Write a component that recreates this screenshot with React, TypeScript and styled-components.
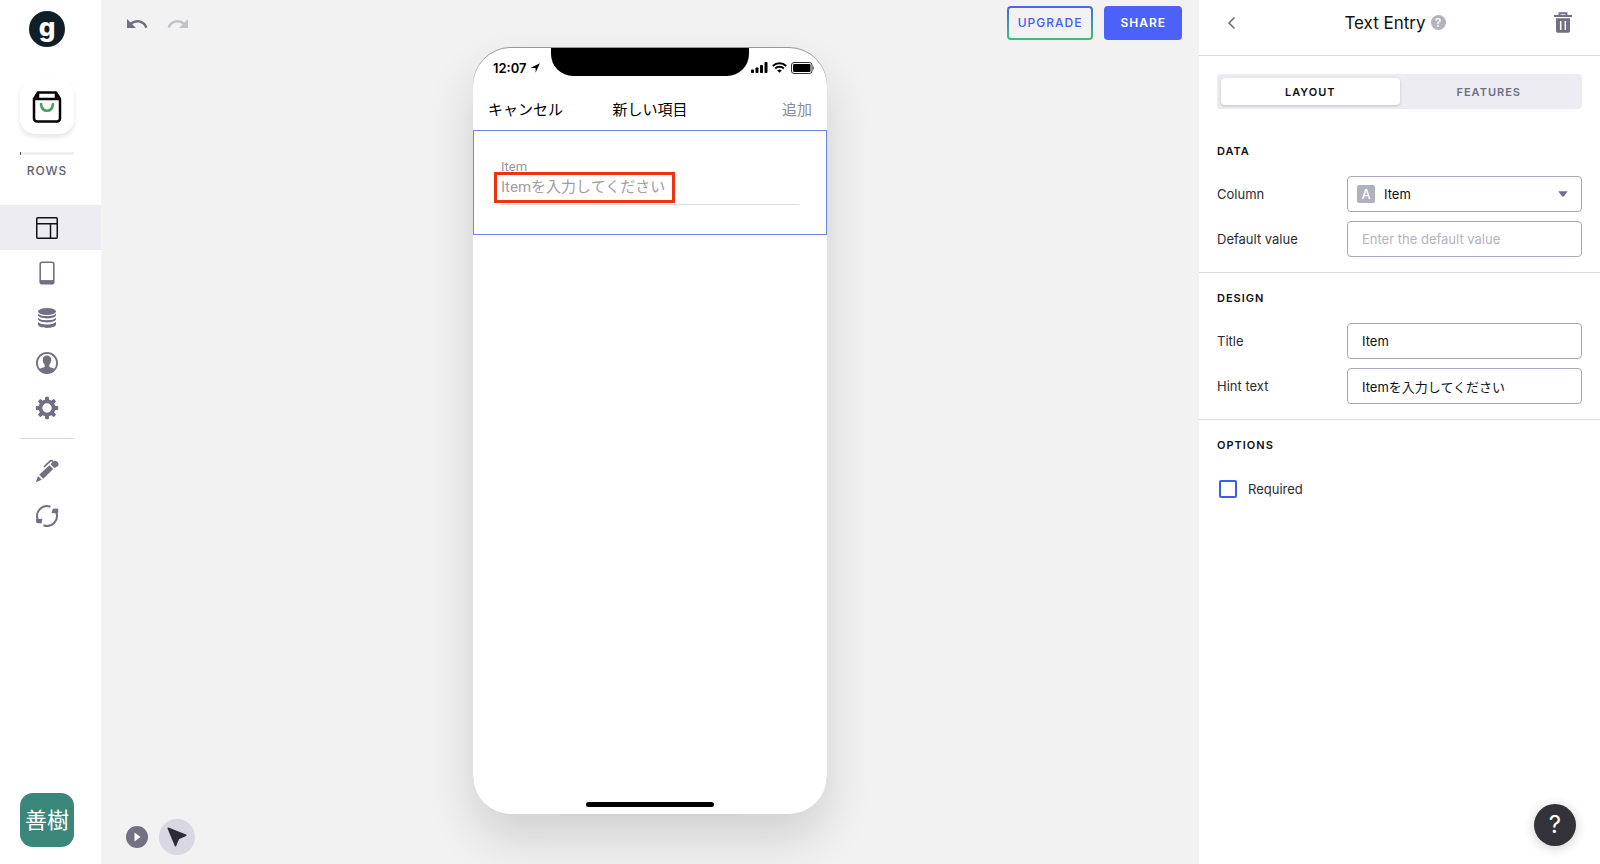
import React from "react";
import styled, { createGlobalStyle } from "styled-components";

const GlobalStyle = createGlobalStyle`
  *, *::before, *::after { box-sizing: border-box; }
  body {
    margin: 0;
    background: #f2f2f2;
    color: #0f0f14;
    font-family: Inter, "Noto Sans CJK JP", sans-serif;
    font-size: 13px;
    line-height: 20px;
  }
  button, input, select { font: inherit; color: inherit; letter-spacing: inherit; }
  button { border: 0; padding: 0; background: none; cursor: pointer; }
  svg { display: block; }
`;

const Shell = styled.div`
  display: grid;
  grid-template-columns: 101px minmax(0, 1fr) 401px;
  min-height: 100vh;
`;

/* Sidebar */

const Sidebar = styled.nav`
  display: flex;
  flex-direction: column;
  background: #fff;
  padding: 11px 0 17px;
`;

const SideBlock = styled.div`
  display: flex;
  flex-direction: column;
  align-items: flex-start;
  padding-left: 20px;
`;

const Logo = styled.a`
  display: flex;
  justify-content: center;
  width: 36px;
  height: 36px;
  margin-left: 9px;
  border-radius: 50%;
  background: #0f1f26;
  color: #fff;
  font-size: 26px;
  font-weight: 800;
  line-height: 31px;
  text-decoration: none;
`;

const AppTile = styled.button`
  display: grid;
  place-items: center;
  width: 54px;
  height: 54px;
  margin-top: 33px;
  border-radius: 15px;
  background: #fff;
  box-shadow: 0 3px 5px rgba(0, 0, 0, 0.1);
`;

const Usage = styled.div`
  width: 54px;
  height: 3px;
  margin-top: 18px;
  background: linear-gradient(to right, #47586a 1px, #f0f0f1 1px);
`;

const UsageLabel = styled.div`
  width: 54px;
  margin: 6px 0 24px;
  color: #5f5e70;
  font-size: 12px;
  font-weight: 500;
  letter-spacing: 1px;
  text-align: center;
`;

const NavButton = styled.button<{ $active?: boolean }>`
  display: grid;
  place-items: center;
  width: 100%;
  height: 45px;
  padding-right: 7px;
  background: ${(p) => (p.$active ? "#edecf2" : "transparent")};
  color: ${(p) => (p.$active ? "#111016" : "#716f81")};
`;

const SideRule = styled.hr`
  width: 54px;
  height: 1px;
  margin: 8px 27px 9px 20px;
  border: 0;
  background: #d6d5e3;
`;

const Avatar = styled.button`
  width: 54px;
  height: 54px;
  margin: auto 0 0 20px;
  border-radius: 13px;
  background: #3a8679;
  color: #fff;
  font-size: 22px;
`;

/* Canvas */

const Canvas = styled.main`
  display: grid;
  grid-template-columns: 1fr 354px 1fr;
`;

const Column = styled.div<{ $end?: boolean }>`
  display: flex;
  flex-direction: column;
  justify-content: space-between;
  align-items: ${(p) => (p.$end ? "flex-end" : "flex-start")};
  padding: ${(p) => (p.$end ? "6px 17px" : "12px 24px 9px")};
`;

const Tools = styled.div<{ $gap: number }>`
  display: flex;
  align-items: center;
  gap: ${(p) => p.$gap}px;
`;

const ToolButton = styled.button<{ $muted?: boolean }>`
  color: ${(p) => (p.$muted ? "#c3c2cc" : "#716f81")};
`;

const PlayButton = styled.button`
  display: grid;
  place-items: center;
  width: 22px;
  height: 22px;
  margin-left: 1px;
  border-radius: 50%;
  background: #737182;
`;

const PointerButton = styled.button`
  display: grid;
  place-items: center;
  width: 36px;
  height: 36px;
  border-radius: 50%;
  background: #d8d7e2;
`;

const UpgradeButton = styled.button`
  height: 34px;
  padding: 0 9px;
  border: 2px solid transparent;
  border-radius: 4px;
  background: linear-gradient(#f2f2f2, #f2f2f2) padding-box,
    linear-gradient(#4665ee, #3fc06c) border-box;
  color: #3f5cf3;
  font-size: 12px;
  font-weight: 500;
  letter-spacing: 1px;
`;

const ShareButton = styled.button`
  height: 34px;
  padding: 0 16px;
  border-radius: 4px;
  background: #4b61f8;
  color: #fff;
  font-size: 12px;
  font-weight: 600;
  letter-spacing: 1px;
`;

const Phone = styled.section`
  display: flex;
  flex-direction: column;
  min-height: 640px;
  margin: 48px 0 50px;
  border-radius: 38px;
  background: #fff;
  box-shadow: 0 24px 48px rgba(0, 0, 0, 0.14), 0 -1px 0 #9b9b9b;
`;

const StatusBar = styled.div`
  display: grid;
  grid-template-columns: 78px 198px 78px;
  height: 39px;
`;

const Clock = styled.div`
  display: flex;
  align-items: center;
  gap: 3px;
  padding-left: 20px;
  color: #000;
  font-weight: 600;
`;

const Notch = styled.div`
  height: 28px;
  border-radius: 0 0 22px 22px;
  background: #000;
`;

const Signals = styled.div`
  display: flex;
  align-items: center;
  justify-content: flex-end;
  gap: 4px;
  padding-right: 13px;
`;

const AppBar = styled.header`
  display: grid;
  grid-template-columns: 1fr auto 1fr;
  align-items: center;
  height: 43px;
  padding: 3px 15px 0;
  font-size: 15px;
  color: #000;
`;

const AppBarButton = styled.button<{ $muted?: boolean }>`
  color: ${(p) => (p.$muted ? "#8c8c8c" : "#000")};
  text-align: ${(p) => (p.$muted ? "right" : "left")};
`;

const AppBarTitle = styled.h2`
  margin: 0;
  font-size: 15px;
  font-weight: 400;
`;

const Selected = styled.div`
  height: 105px;
  padding: 27px 27px 0;
  border: 1px solid #6e86dd;
  color: #979797;
  font-family: Roboto, "Noto Sans CJK JP", sans-serif;
`;

const PreviewLabel = styled.label`
  display: block;
  line-height: 18px;
`;

const PreviewInput = styled.input`
  display: block;
  width: 100%;
  height: 29px;
  padding: 0 0 6px;
  border: 0;
  border-bottom: 1px solid #dedede;
  outline: 0;
  background: transparent;
  font-size: 15px;
  &::placeholder { color: #a0a0a0; opacity: 1; }
`;

const PreviewField = styled.div`
  position: relative;
`;

const Highlight = styled.div`
  position: absolute;
  top: -4px;
  left: -7px;
  width: 181px;
  height: 31px;
  border: 3px solid #ee3311;
`;

const HomeBar = styled.div`
  width: 128px;
  height: 5px;
  margin: auto auto 7px;
  border-radius: 3px;
  background: #000;
`;

/* Inspector */

const Inspector = styled.aside`
  position: relative;
  background: #fff;
`;

const PanelHeader = styled.header`
  display: flex;
  align-items: center;
  justify-content: space-between;
  height: 56px;
  padding: 0 28px 10px;
  border-bottom: 1px solid #d5d5d9;
  color: #716f81;
`;

const PanelTitle = styled.h1`
  display: flex;
  align-items: center;
  gap: 5px;
  margin: 0;
  color: #111;
  font-size: 17px;
  font-weight: 400;
`;

const HelpDot = styled.span`
  display: grid;
  place-items: center;
  width: 15px;
  height: 15px;
  border-radius: 50%;
  background: #b3b2be;
  color: #fff;
  font-size: 12px;
  font-weight: 600;
  line-height: 15px;
`;

const Tabs = styled.div`
  display: grid;
  grid-template-columns: 1fr 1fr;
  height: 35px;
  margin: 18px 18px 0;
  padding: 4px;
  border-radius: 4px;
  background: #edecf2;
`;

const Tab = styled.button<{ $active?: boolean }>`
  border-radius: 4px;
  background: ${(p) => (p.$active ? "#fff" : "transparent")};
  box-shadow: ${(p) => (p.$active ? "0 1px 3px rgba(60, 58, 80, 0.25)" : "none")};
  color: ${(p) => (p.$active ? "#0f0f14" : "#716f81")};
  font-size: 11px;
  font-weight: 600;
  letter-spacing: 1px;
`;

const Group = styled.section`
  display: flex;
  flex-direction: column;
  gap: 9px;
  padding: 15px 18px;
  & + & { border-top: 1px solid #d6d5e0; }
`;

const Groups = styled.div`
  padding-top: 17px;
`;

const GroupTitle = styled.h3`
  margin: 0 0 6px;
  font-size: 11px;
  font-weight: 600;
  letter-spacing: 1px;
`;

const FieldRow = styled.div`
  display: grid;
  grid-template-columns: 130px minmax(0, 1fr);
  align-items: center;
`;

const FieldLabel = styled.label`
  color: #2c2b33;
`;

const TextInput = styled.input`
  width: 100%;
  height: 36px;
  padding: 0 14px;
  border: 1px solid #a9a7b8;
  border-radius: 4px;
  outline: 0;
  background: #fff;
  &::placeholder { color: #b3b2be; opacity: 1; }
`;

const SelectBox = styled.div`
  display: grid;
  grid-template-columns: 48px 1fr 38px;
  align-items: center;
  & > * { grid-row: 1; }
`;

const Select = styled.select`
  grid-column: 1 / -1;
  height: 36px;
  padding: 0 36px;
  appearance: none;
  border: 1px solid #a9a7b8;
  border-radius: 4px;
  outline: 0;
  background: #fff;
`;

const TypeBadge = styled.span`
  grid-column: 1;
  width: 18px;
  height: 18px;
  margin-left: 10px;
  border-radius: 2px;
  background: #b1b0bd;
  color: #fff;
  font-weight: 500;
  line-height: 18px;
  text-align: center;
  pointer-events: none;
`;

const Caret = styled.svg`
  grid-column: 3;
  justify-self: center;
  pointer-events: none;
`;

const CheckLabel = styled.label`
  display: flex;
  align-items: center;
  gap: 11px;
  padding: 9px 2px;
  color: #2c2b33;
`;

const Checkbox = styled.input`
  appearance: none;
  width: 18px;
  height: 18px;
  margin: 0;
  border: 2px solid #3c5bf5;
  border-radius: 2px;
  background: #fff;
  &:checked { background: #3c5bf5; }
`;

const HelpButton = styled.button`
  position: absolute;
  right: 24px;
  bottom: 18px;
  width: 42px;
  height: 42px;
  border-radius: 50%;
  background: #323238;
  color: #fff;
  font-size: 24px;
  font-weight: 400;
  box-shadow: 0 2px 12px rgba(0, 0, 0, 0.2);
`;

const UndoIcon = () => (
  <svg width="24" height="24" viewBox="0 0 24 24" fill="currentColor">
    <path d="M12.5 8c-2.65 0-5.05.99-6.9 2.6L2 7v9h9l-3.62-3.62c1.39-1.16 3.16-1.88 5.12-1.88 3.54 0 6.55 2.31 7.6 5.5l2.37-.78C21.08 11.03 17.15 8 12.5 8z" />
  </svg>
);

const RedoIcon = () => (
  <svg width="24" height="24" viewBox="0 0 24 24" fill="currentColor">
    <path d="M18.4 10.6C16.55 8.99 14.15 8 11.5 8c-4.65 0-8.58 3.03-9.96 7.22L3.9 16c1.05-3.19 4.05-5.5 7.6-5.5 1.95 0 3.73.72 5.12 1.88L13 16h9V7l-3.6 3.6z" />
  </svg>
);

const BagIcon = () => (
  <svg width="32" height="34" viewBox="0 0 32 34" fill="none" strokeLinejoin="round" strokeLinecap="round">
    <path d="M3 9v19.500a3 3 0 0 0 3 3h20a3 3 0 0 0 3-3V9M3 9l4-6.500h18L29 9zM7 3v5M25 3v5" stroke="#050505" strokeWidth="2.500" />
    <path d="M10 14c.5 4.500 3 6.800 6 6.800s5.500-2.300 6-6.800" stroke="#46a064" strokeWidth="2.600" />
  </svg>
);

const LayoutIcon = () => (
  <svg width="24" height="24" viewBox="0 0 24 24" fill="none" stroke="currentColor" strokeWidth="1.500">
    <rect x="1.750" y="1.750" width="20.500" height="20.500" rx="1" />
    <path d="M2 7.750h20M15.500 8v14" />
  </svg>
);

const PhoneIcon = () => (
  <svg width="24" height="24" viewBox="0 0 24 24" fill="none" stroke="currentColor">
    <rect x="5.200" y="1.200" width="13.600" height="21.600" rx="2" strokeWidth="1.600" />
    <path d="M5.500 20.800h13" strokeWidth="3.400" />
  </svg>
);

const DatabaseIcon = () => (
  <svg width="24" height="24" viewBox="0 0 24 24" fill="currentColor">
    <ellipse cx="12" cy="5.500" rx="9" ry="3.500" />
    <path d="M3 7.200c1 1.900 4.500 2.900 9 2.900s8-1 9-2.900v1.900c0 1.900-4 3.400-9 3.400s-9-1.500-9-3.400z" />
    <path d="M3 11.200c1 1.900 4.500 2.900 9 2.900s8-1 9-2.900v1.900c0 1.900-4 3.400-9 3.400s-9-1.500-9-3.400z" />
    <path d="M3 15.400c1 1.900 4.500 2.900 9 2.900s8-1 9-2.900v3.100c0 1.900-4 3.400-9 3.400s-9-1.500-9-3.400z" />
    <path d="M3 14.900c1 1.900 4.500 2.900 9 2.900s8-1 9-2.900M3 10.800c1 1.900 4.500 2.900 9 2.900s8-1 9-2.900" fill="none" stroke="#fff" strokeWidth=".9" />
  </svg>
);

const UserIcon = () => (
  <svg width="24" height="24" viewBox="0 0 24 24">
    <circle cx="12" cy="12" r="10.100" fill="none" stroke="currentColor" strokeWidth="1.800" />
    <path d="M12 4.600c-2.700 0-4.200 1.800-4.200 4.300 0 1.900.7 3.700 1.900 4.800v1.900c0 1-4.400 1.400-5.700 3A10.600 10.600 0 0 0 12 22.500a10.600 10.600 0 0 0 8-3.900c-1.300-1.600-5.700-2-5.700-3v-1.900c1.200-1.100 1.900-2.900 1.900-4.800 0-2.500-1.500-4.300-4.200-4.300z" fill="currentColor" />
  </svg>
);

const GearIcon = () => (
  <svg width="24" height="24" viewBox="0 0 24 24" fill="currentColor">
    {[0, 45, 90, 135].map((a) => (
      <path key={a} d="M9.800 5L10.100 1.400Q10.200.8 10.800.8h2.400q.6 0 .7.6L14.200 5zM9.800 19l.3 3.600q.1.600.7.600h2.400q.6 0 .7-.6l.3-3.600z" transform={`rotate(${a} 12 12)`} />
    ))}
    <circle cx="12" cy="12" r="6.600" fill="none" stroke="currentColor" strokeWidth="3.800" />
  </svg>
);

const PenIcon = () => (
  <svg width="24" height="24" viewBox="0 0 24 24" fill="currentColor">
    <path d="M.8 23.200l2.200-6.200 3.700 3.800zM4.200 15.700L14.500 6.300l3.700 3.800L8.300 19.800zM15.600 5.200l2-2.200a3.300 3.300 0 0 1 4.700-.2 3.300 3.300 0 0 1 .1 4.700l-3.100 1.500z" />
    <path d="M9.500 7.500l5-4.800Q16 1.200 17.500 1.900" fill="none" stroke="currentColor" strokeWidth="1.700" strokeLinecap="round" />
  </svg>
);

const SyncIcon = () => (
  <svg width="24" height="24" viewBox="0 0 24 24" fill="none" stroke="currentColor" strokeWidth="2">
    <path d="M15.500 2.700A9.900 9.900 0 0 0 3.200 16.500M8.500 21.300A9.900 9.900 0 0 0 20.800 7.500" />
    <path d="M.8 15l6.600-.2-.9 4.700-5-.6zM23.200 9l-6.600.2 1.200-4.500 5.400-.3z" fill="currentColor" stroke="none" />
  </svg>
);

const LocationIcon = () => (
  <svg width="10" height="10" viewBox="0 0 10 10">
    <path d="M9.800.2L5.600 9.800V4.900H.4z" fill="#000" />
  </svg>
);

const SignalIcon = () => (
  <svg width="17" height="11" viewBox="0 0 17 11" fill="#000">
    <rect x="0" y="7.500" width="3" height="3.500" rx=".8" />
    <rect x="4.500" y="5.500" width="3" height="5.500" rx=".8" />
    <rect x="9" y="3" width="3" height="8" rx=".8" />
    <rect x="13.500" y="0" width="3" height="11" rx=".8" />
  </svg>
);

const WifiIcon = () => (
  <svg width="15" height="11" viewBox="0 0 15 11" fill="none" stroke="#000" strokeWidth="1.900">
    <path d="M.8 4a9.600 9.600 0 0 1 13.400 0M3.200 6.500a6.200 6.200 0 0 1 8.600 0" />
    <path d="M7.500 10.800L5.200 8.500a3.300 3.300 0 0 1 4.600 0z" fill="#000" stroke="none" />
  </svg>
);

const BatteryIcon = () => (
  <svg width="23" height="12" viewBox="0 0 23 12">
    <rect x=".5" y=".5" width="20.500" height="11" rx="2.500" fill="none" stroke="#333" />
    <rect x="2" y="2" width="17.500" height="8" rx="1.200" fill="#000" />
    <path d="M21.800 4v4q1-.6 1-2t-1-2z" fill="#333" />
  </svg>
);

const ChevronIcon = () => (
  <svg width="9" height="12" viewBox="0 0 9 12" fill="none" stroke="currentColor" strokeWidth="1.700" strokeLinecap="round" strokeLinejoin="round">
    <path d="M7 1L2 6l5 5" />
  </svg>
);

const TrashIcon = () => (
  <svg width="18" height="21" viewBox="0 0 18 21">
    <path d="M0 4h18M5.500 4V1.200h7V4" fill="none" stroke="currentColor" strokeWidth="1.900" />
    <path d="M2 6.300h14v12.700a1.800 1.800 0 0 1-1.800 1.800H3.800A1.800 1.800 0 0 1 2 19z" fill="currentColor" />
    <path d="M6.700 9v9M11.300 9v9" stroke="#fff" strokeWidth="1.500" />
  </svg>
);

const sections = [
  { name: "Layout", Icon: LayoutIcon, active: true },
  { name: "Tabs", Icon: PhoneIcon },
  { name: "Data", Icon: DatabaseIcon },
  { name: "Users", Icon: UserIcon },
  { name: "Settings", Icon: GearIcon },
];

export default function App() {
  return (
    <>
      <GlobalStyle />
      <Shell>
        <Sidebar>
          <SideBlock>
            <Logo href="#">g</Logo>
            <AppTile aria-label="App"><BagIcon /></AppTile>
            <Usage />
            <UsageLabel>ROWS</UsageLabel>
          </SideBlock>
          {sections.map(({ name, Icon, active }) => (
            <NavButton key={name} aria-label={name} $active={active}><Icon /></NavButton>
          ))}
          <SideRule />
          <NavButton aria-label="Edit"><PenIcon /></NavButton>
          <NavButton aria-label="Reload"><SyncIcon /></NavButton>
          <Avatar>善樹</Avatar>
        </Sidebar>

        <Canvas>
          <Column>
            <Tools $gap={17}>
              <ToolButton aria-label="Undo"><UndoIcon /></ToolButton>
              <ToolButton aria-label="Redo" $muted><RedoIcon /></ToolButton>
            </Tools>
            <Tools $gap={11}>
              <PlayButton aria-label="Play">
                <svg width="8" height="10" viewBox="0 0 8 10"><path d="M1.500.5v9L7.500 5z" fill="#fff" /></svg>
              </PlayButton>
              <PointerButton aria-label="Select">
                <svg width="20" height="20" viewBox="0 0 20 20">
                  <path d="M1.200 1.200L18.800 8.300 11.500 11.500 8.500 18.800z" fill="#2c2c33" stroke="#2c2c33" strokeWidth="1.500" strokeLinejoin="round" />
                </svg>
              </PointerButton>
            </Tools>
          </Column>

          <Phone>
            <StatusBar>
              <Clock>12:07<LocationIcon /></Clock>
              <Notch />
              <Signals><SignalIcon /><WifiIcon /><BatteryIcon /></Signals>
            </StatusBar>
            <AppBar>
              <AppBarButton>キャンセル</AppBarButton>
              <AppBarTitle>新しい項目</AppBarTitle>
              <AppBarButton $muted>追加</AppBarButton>
            </AppBar>
            <Selected>
              <PreviewLabel htmlFor="preview">Item</PreviewLabel>
              <PreviewField>
                <PreviewInput id="preview" placeholder="Itemを入力してください" />
                <Highlight />
              </PreviewField>
            </Selected>
            <HomeBar />
          </Phone>

          <Column $end>
            <Tools $gap={11}>
              <UpgradeButton>UPGRADE</UpgradeButton>
              <ShareButton>SHARE</ShareButton>
            </Tools>
          </Column>
        </Canvas>

        <Inspector>
          <PanelHeader>
            <ToolButton aria-label="Back"><ChevronIcon /></ToolButton>
            <PanelTitle>Text Entry<HelpDot>?</HelpDot></PanelTitle>
            <ToolButton aria-label="Delete"><TrashIcon /></ToolButton>
          </PanelHeader>
          <Tabs>
            <Tab $active>LAYOUT</Tab>
            <Tab>FEATURES</Tab>
          </Tabs>
          <Groups>
            <Group>
              <GroupTitle>DATA</GroupTitle>
              <FieldRow>
                <FieldLabel htmlFor="column">Column</FieldLabel>
                <SelectBox>
                  <Select id="column"><option>Item</option></Select>
                  <TypeBadge>A</TypeBadge>
                  <Caret width="10" height="6" viewBox="0 0 10 6"><path d="M.3.300h9.400L6 5.200q-1 .9-2 0z" fill="#716f91" /></Caret>
                </SelectBox>
              </FieldRow>
              <FieldRow>
                <FieldLabel htmlFor="default">Default value</FieldLabel>
                <TextInput id="default" placeholder="Enter the default value" />
              </FieldRow>
            </Group>
            <Group>
              <GroupTitle>DESIGN</GroupTitle>
              <FieldRow>
                <FieldLabel htmlFor="title">Title</FieldLabel>
                <TextInput id="title" defaultValue="Item" />
              </FieldRow>
              <FieldRow>
                <FieldLabel htmlFor="hint">Hint text</FieldLabel>
                <TextInput id="hint" defaultValue="Itemを入力してください" />
              </FieldRow>
            </Group>
            <Group>
              <GroupTitle>OPTIONS</GroupTitle>
              <CheckLabel><Checkbox type="checkbox" />Required</CheckLabel>
            </Group>
          </Groups>
          <HelpButton aria-label="Help">?</HelpButton>
        </Inspector>
      </Shell>
    </>
  );
}
